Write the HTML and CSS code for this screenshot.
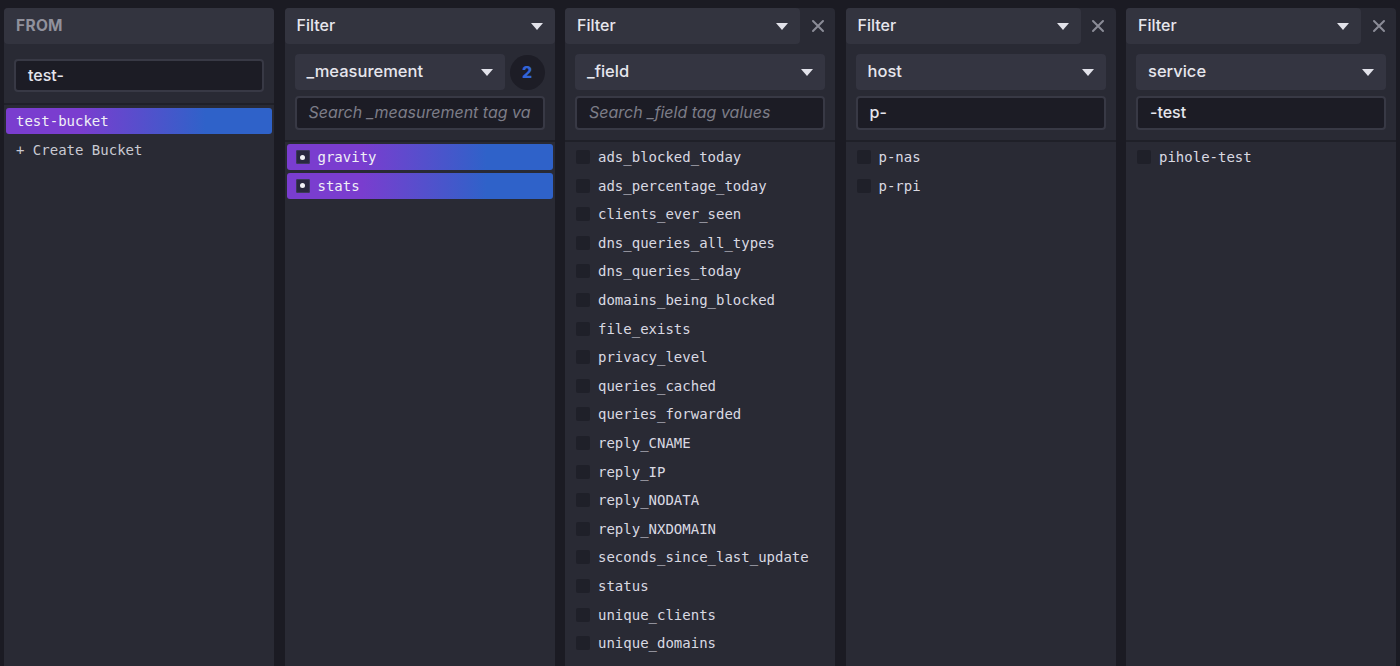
FILE: index.html
```html
<!DOCTYPE html>
<html>
<head>
<meta charset="utf-8">
<link rel="stylesheet" href="styles.css">
</head>
<body>
<div class="board">
  <section class="panel">
    <div class="panel-head">
      <div class="head-main"><span class="from-title">FROM</span></div>
    </div>
    <div class="from-search">
      <div class="input"><span class="input-text">test-</span></div>
    </div>
    <div class="list from-list">
      <div class="item selected"><span class="item-text">test-bucket</span></div>
      <div class="item create"><span class="item-text">+ Create Bucket</span></div>
    </div>
  </section>

  <section class="panel">
    <div class="panel-head">
      <div class="head-main"><span class="head-title">Filter</span><span class="caret"></span></div>
    </div>
    <div class="controls">
      <div class="dd-row">
        <div class="dropdown"><span class="dd-text">_measurement</span><span class="caret"></span></div>
        <div class="badge">2</div>
      </div>
      <div class="input"><span class="placeholder">Search _measurement tag va</span></div>
    </div>
    <div class="list">
      <div class="item selected"><span class="check on"></span><span class="item-text">gravity</span></div>
      <div class="item selected"><span class="check on"></span><span class="item-text">stats</span></div>
    </div>
  </section>

  <section class="panel">
    <div class="panel-head">
      <div class="head-main"><span class="head-title">Filter</span><span class="caret"></span></div>
      <div class="head-close"><svg width="14" height="14" viewBox="0 0 14 14"><path d="M2 2L12 12M12 2L2 12" stroke="#8b8c97" stroke-width="2" stroke-linecap="round"/></svg></div>
    </div>
    <div class="controls">
      <div class="dd-row">
        <div class="dropdown"><span class="dd-text">_field</span><span class="caret"></span></div>
      </div>
      <div class="input"><span class="placeholder">Search _field tag values</span></div>
    </div>
    <div class="list">
      <div class="item"><span class="check"></span><span class="item-text">ads_blocked_today</span></div>
      <div class="item"><span class="check"></span><span class="item-text">ads_percentage_today</span></div>
      <div class="item"><span class="check"></span><span class="item-text">clients_ever_seen</span></div>
      <div class="item"><span class="check"></span><span class="item-text">dns_queries_all_types</span></div>
      <div class="item"><span class="check"></span><span class="item-text">dns_queries_today</span></div>
      <div class="item"><span class="check"></span><span class="item-text">domains_being_blocked</span></div>
      <div class="item"><span class="check"></span><span class="item-text">file_exists</span></div>
      <div class="item"><span class="check"></span><span class="item-text">privacy_level</span></div>
      <div class="item"><span class="check"></span><span class="item-text">queries_cached</span></div>
      <div class="item"><span class="check"></span><span class="item-text">queries_forwarded</span></div>
      <div class="item"><span class="check"></span><span class="item-text">reply_CNAME</span></div>
      <div class="item"><span class="check"></span><span class="item-text">reply_IP</span></div>
      <div class="item"><span class="check"></span><span class="item-text">reply_NODATA</span></div>
      <div class="item"><span class="check"></span><span class="item-text">reply_NXDOMAIN</span></div>
      <div class="item"><span class="check"></span><span class="item-text">seconds_since_last_update</span></div>
      <div class="item"><span class="check"></span><span class="item-text">status</span></div>
      <div class="item"><span class="check"></span><span class="item-text">unique_clients</span></div>
      <div class="item"><span class="check"></span><span class="item-text">unique_domains</span></div>
    </div>
  </section>

  <section class="panel">
    <div class="panel-head">
      <div class="head-main"><span class="head-title">Filter</span><span class="caret"></span></div>
      <div class="head-close"><svg width="14" height="14" viewBox="0 0 14 14"><path d="M2 2L12 12M12 2L2 12" stroke="#8b8c97" stroke-width="2" stroke-linecap="round"/></svg></div>
    </div>
    <div class="controls">
      <div class="dd-row">
        <div class="dropdown"><span class="dd-text">host</span><span class="caret"></span></div>
      </div>
      <div class="input"><span class="input-text">p-</span></div>
    </div>
    <div class="list">
      <div class="item"><span class="check"></span><span class="item-text">p-nas</span></div>
      <div class="item"><span class="check"></span><span class="item-text">p-rpi</span></div>
    </div>
  </section>

  <section class="panel">
    <div class="panel-head">
      <div class="head-main"><span class="head-title">Filter</span><span class="caret"></span></div>
      <div class="head-close"><svg width="14" height="14" viewBox="0 0 14 14"><path d="M2 2L12 12M12 2L2 12" stroke="#8b8c97" stroke-width="2" stroke-linecap="round"/></svg></div>
    </div>
    <div class="controls">
      <div class="dd-row">
        <div class="dropdown"><span class="dd-text">service</span><span class="caret"></span></div>
      </div>
      <div class="input"><span class="input-text">-test</span></div>
    </div>
    <div class="list">
      <div class="item"><span class="check"></span><span class="item-text">pihole-test</span></div>
    </div>
  </section>
</div>
</body>
</html>
```

FILE: styles.css
```css
* { box-sizing: border-box; }
html, body {
  margin: 0;
  height: 666px;
  overflow: hidden;
  background: #1b1b23;
  font-family: Inter, "Open Sans", sans-serif;
  color: #e3e3ea;
}
.board {
  display: flex;
  gap: 10.5px;
  padding: 8px 4px 0;
  height: 666px;
}
.panel {
  flex: 1 1 0;
  min-width: 0;
  background: #292a34;
  border-radius: 4px 4px 0 0;
  display: flex;
  flex-direction: column;
}
.panel-head {
  height: 36px;
  display: flex;
  flex: none;
}
.head-main {
  flex: 1;
  background: #33343f;
  border-radius: 4px;
  display: flex;
  align-items: center;
  justify-content: space-between;
  padding: 0 12px 2px;
}
.head-close {
  width: 35px;
  display: flex;
  align-items: center;
  justify-content: center;
}
.from-title {
  font-weight: 700;
  font-size: 15.5px;
  color: #90919c;
  letter-spacing: 0.3px;
}
.head-title {
  font-weight: 500;
  font-size: 16px;
  color: #e7e7ee;
}
.caret {
  width: 0;
  height: 0;
  border-left: 6px solid transparent;
  border-right: 6px solid transparent;
  border-top: 7px solid #e2e2ea;
  margin-top: 2px;
}
.from-search {
  padding: 15px 10px 11px;
  border-bottom: 2px solid #1f2028;
}
.controls {
  padding: 10px 10px 10px;
  border-bottom: 2px solid #1f2028;
  display: flex;
  flex-direction: column;
  gap: 6px;
}
.dd-row {
  display: flex;
  align-items: center;
  gap: 5px;
}
.dropdown {
  flex: 1;
  height: 36px;
  background: #343541;
  border-radius: 4px;
  display: flex;
  align-items: center;
  justify-content: space-between;
  padding: 0 12px 2px;
}
.dd-text {
  font-size: 16.5px;
  font-weight: 500;
  color: #e6e6ed;
}
.badge {
  width: 35px;
  height: 35px;
  border-radius: 50%;
  background: #1d1d26;
  color: #3264d6;
  font-weight: 800;
  font-size: 16px;
  display: flex;
  align-items: center;
  justify-content: center;
  padding-bottom: 1px;
}
.input {
  height: 34px;
  background: #1c1c25;
  border: 2px solid #383945;
  border-radius: 4px;
  display: flex;
  align-items: center;
  padding: 0 12px 2px;
  overflow: hidden;
  white-space: nowrap;
}
.from-search .input { height: 33px; }
.input-text {
  font-size: 16px;
  font-weight: 500;
  color: #e6e6ed;
}
.placeholder {
  font-size: 16px;
  font-style: italic;
  color: #7c7d88;
}
.list {
  padding: 2px 2px 0;
  display: flex;
  flex-direction: column;
  gap: 2.6px;
}
.from-list { padding-top: 3px; }
.item {
  height: 26px;
  display: flex;
  align-items: center;
  padding: 0 9px;
  gap: 8px;
  border-radius: 3px;
  font-family: "DejaVu Sans Mono", "Liberation Mono", monospace;
  font-size: 14px;
  color: #d9d9e2;
}
.item.selected {
  background: linear-gradient(90deg, #7a3dcf 28%, #2f62c9 75%);
  color: #f0f0f6;
}
.from-list .item { padding-left: 10px; }
.item.create { color: #c8c9d2; }
.check {
  width: 14px;
  height: 14px;
  background: #1f2029;
  border-radius: 2px;
  flex: none;
  display: flex;
  align-items: center;
  justify-content: center;
}
.check.on {
  background: #2a2840;
  box-shadow: inset 0 0 0 1px #3d3a5a;
}
.check.on::after {
  content: "";
  width: 5px;
  height: 5px;
  border-radius: 50%;
  background: #f2f2f7;
}
```
